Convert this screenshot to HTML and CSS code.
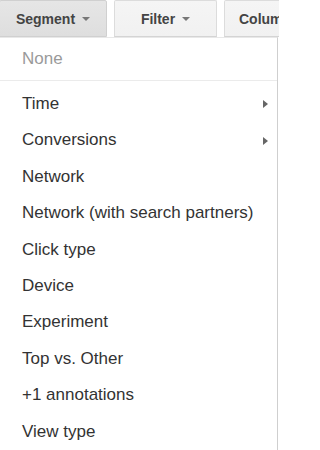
FILE: index.html
```html
<!DOCTYPE html>
<html>
<head>
<meta charset="utf-8">
<link rel="stylesheet" href="styles.css">
</head>
<body>
<div class="toolbar">
  <div class="btn btn-active btn-segment">Segment <span class="caret"></span></div>
  <div class="btn btn-filter">Filter <span class="caret"></span></div>
  <div class="btn btn-columns">Columns <span class="caret"></span></div>
</div>
<div class="menu">
  <div class="none">None</div>
  <ul class="items">
    <li class="item sub">Time<span class="arrow"></span></li>
    <li class="item sub">Conversions<span class="arrow"></span></li>
    <li class="item">Network</li>
    <li class="item">Network (with search partners)</li>
    <li class="item">Click type</li>
    <li class="item">Device</li>
    <li class="item">Experiment</li>
    <li class="item">Top vs. Other</li>
    <li class="item">+1 annotations</li>
    <li class="item">View type</li>
  </ul>
</div>
</body>
</html>
```
FILE: styles.css
```css
html, body {
  margin: 0;
  padding: 0;
  background: #fff;
  overflow: hidden;
  width: 279px;
  height: 450px;
}
body {
  font-family: "Liberation Sans", Arial, sans-serif;
}
.toolbar {
  display: flex;
  gap: 7px;
  height: 37px;
  margin-left: -1px;
  white-space: nowrap;
}
.btn {
  box-sizing: border-box;
  height: 37px;
  border: 1px solid #dcdcdc;
  border-bottom-color: #d4d4d4;
  background: linear-gradient(#f5f5f5, #f1f1f1);
  border-radius: 2px 2px 0 0;
  font-weight: bold;
  font-size: 14px;
  color: #444;
  display: flex;
  align-items: center;
  justify-content: center;
  flex: none;
}
.btn-active {
  background: linear-gradient(#e6e6e6, #dedede);
  border-color: #d0d0d0;
}
.btn-segment { width: 108px; }
.btn-filter { width: 103px; }
.btn-columns { width: 100px; justify-content: flex-start; padding-left: 14px; }
.caret {
  display: inline-block;
  width: 0;
  height: 0;
  border-left: 4.5px solid transparent;
  border-right: 4.5px solid transparent;
  border-top: 4px solid #777;
  margin-left: 7px;
  margin-top: 1px;
}
.menu {
  box-sizing: border-box;
  width: 278px;
  height: 420px;
  border-right: 1px solid #cfcfcf;
  border-top: 1px solid #e8e8e8;
  background: #fff;
}
.none {
  height: 42px;
  line-height: 42px;
  padding-left: 22px;
  font-size: 17px;
  color: #9a9a9a;
  border-bottom: 1px solid #ebebeb;
}
.items {
  list-style: none;
  margin: 0;
  padding: 5px 0 0 0;
}
.item {
  height: 36.4px;
  line-height: 36.4px;
  padding-left: 22px;
  font-size: 17px;
  color: #333;
  display: flex;
  align-items: center;
  justify-content: space-between;
  padding-right: 9px;
}
.arrow {
  display: inline-block;
  width: 0;
  height: 0;
  border-top: 4px solid transparent;
  border-bottom: 4px solid transparent;
  border-left: 5px solid #666;
}
```
